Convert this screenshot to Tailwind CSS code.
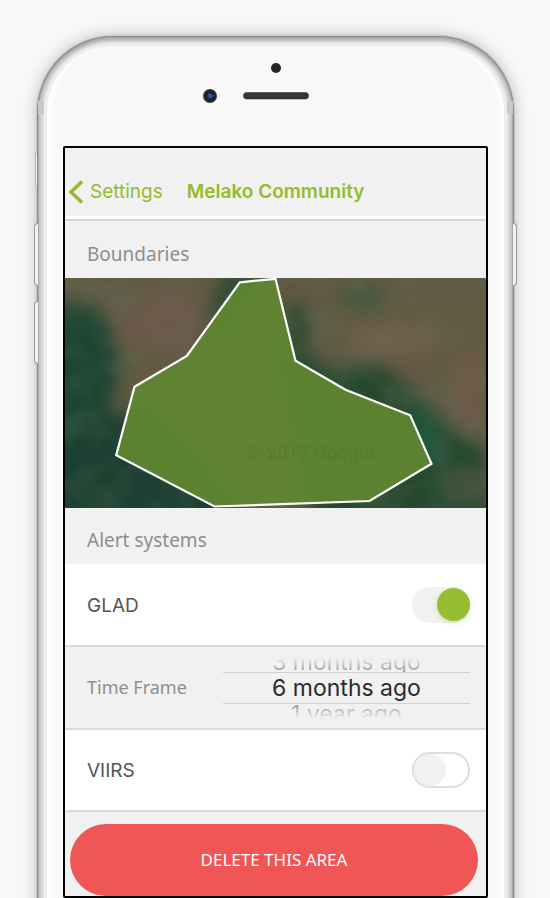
<!DOCTYPE html>
<html lang="en">
<head>
<meta charset="utf-8">
<meta name="viewport" content="width=device-width, initial-scale=1">
<title>Melako Community</title>
<script src="https://cdn.jsdelivr.net/npm/@tailwindcss/browser@4"></script>
</head>
<body class="bg-[#f8f8f8] font-['Inter','Roboto',sans-serif]">
<div class="overflow-hidden pl-[37px] pr-[36px] pt-9">
  <!-- Phone body -->
  <div class="relative -mb-32 rounded-[76px] bg-[#f8f8f8] px-[26px] pb-32 pt-6 shadow-[0_0_16px_rgba(0,0,0,0.26),0_0_2px_rgba(0,0,0,0.3),inset_0_0_0_1px_#8b8d91,inset_0_0_0_2px_#a7a9ad,inset_0_2px_4px_1px_#97999d,inset_0_0_0_5px_#d3d5d8,inset_0_0_0_7px_#dfe0e2,inset_0_0_0_8px_#f1f1f1,inset_0_0_0_10px_#ececec,inset_8px_0_5px_6px_#ffffff,inset_-8px_0_5px_6px_#ffffff]">
    <!-- Side buttons and antenna bands -->
    <span class="absolute -left-[2px] top-[116px] h-[35px] w-[2px] rounded-l-sm border border-r-0 border-[#b4b5b7] bg-[#eeeeee]"></span>
    <span class="absolute -left-[3px] top-[187px] h-[63px] w-[4px] rounded-l-sm border border-r-0 border-[#96989b] bg-[#f1f1f1]"></span>
    <span class="absolute -left-[3px] top-[265px] h-[63px] w-[4px] rounded-l-sm border border-r-0 border-[#96989b] bg-[#f1f1f1]"></span>
    <span class="absolute -right-[3px] top-[187px] h-[63px] w-[4px] rounded-r-sm border border-l-0 border-[#96989b] bg-[#f1f1f1]"></span>
    <span class="absolute left-px top-[65px] h-[13px] w-[6px] bg-[#c9c9c9]"></span>
    <span class="absolute right-px top-[65px] h-[13px] w-[6px] bg-[#c9c9c9]"></span>

    <svg class="mx-auto block h-[86px] w-[160px]" viewBox="0 0 160 86" aria-hidden="true">
      <defs>
        <radialGradient id="lens"><stop offset="0" stop-color="#3357b4"/><stop offset=".35" stop-color="#1f3266"/><stop offset=".6" stop-color="#171a22"/><stop offset="1" stop-color="#3c3c3c"/></radialGradient>
      </defs>
      <circle cx="80" cy="8" r="5" fill="#2a2224"/>
      <circle cx="14" cy="36" r="7" fill="url(#lens)"/>
      <path d="M12 34l3 1-1 3M16 37l2-2" stroke="#4a6fc0" stroke-width=".7" fill="none"/>
      <rect x="47.500" y="32.500" width="65" height="6.500" rx="3" fill="#363637" stroke="#222" stroke-width=".5"/>
    </svg>

    <main class="overflow-hidden rounded-xs border-2 border-black bg-[#f1f1f1]">
      <header class="flex h-[73px] items-end border-b-2 border-[#d5d5d5]">
        <div class="flex w-full items-center border-b-[3px] border-white pb-2">
          <a href="#settings" class="flex items-center text-[19px] leading-8 text-[#94bc2c]">
            <svg class="mx-[3px] h-6 w-4" viewBox="0 0 16 24" fill="none" stroke="#94bc2c" stroke-width="3.500" aria-hidden="true"><path d="M14 1.500L3 12l11 10.500"/></svg>
            <span class="pl-[3px]">Settings</span>
          </a>
          <h1 class="pl-6 text-[19px] font-semibold leading-8 text-[#94bc2c]">Melako Community</h1>
        </div>
      </header>

      <section>
        <h2 class="h-[57px] pl-[22px] pt-[17px] font-['Noto_Sans',sans-serif] text-[19px] leading-8 text-[#8e8e8e]">Boundaries</h2>
        <svg class="block h-[230px] w-full" viewBox="0 0 422 230" preserveAspectRatio="xMidYMid slice" role="img" aria-label="Area boundary on satellite map">
          <defs>
            <filter id="soft" x="-30%" y="-30%" width="160%" height="160%"><feGaussianBlur stdDeviation="9"/></filter>
            <filter id="grain" x="0" y="0" width="100%" height="100%">
              <feTurbulence type="fractalNoise" baseFrequency=".03" numOctaves="2" seed="8"/>
              <feColorMatrix values="0 0 0 0 .12  0 0 0 0 .18  0 0 0 0 .12  1.600 0 0 0 -.65"/>
            </filter>
          </defs>
          <rect width="422" height="230" fill="#625a43"/>
          <g filter="url(#soft)">
            <path d="M-30 26L28 26 46 50 56 90 46 130 48 250H-30z" fill="#1f4531"/>
            <path d="M30 145L80 130 190 250H-20V180z" fill="#1f4131"/>
            <path d="M165 -12L200 -12 150 55 130 60z" fill="#2b4832"/>
            <path d="M222 20L246 35 240 75 270 92 305 82 330 95 352 118 385 145 422 172 422 250H250L220 90z" fill="#26482f"/>
            <path d="M350 120L380 150 375 190 340 170z" fill="#21563b"/>
            <ellipse cx="100" cy="42" rx="42" ry="32" fill="#6d5a49"/>
            <ellipse cx="298" cy="20" rx="24" ry="12" fill="#40583a"/>
            <ellipse cx="330" cy="62" rx="50" ry="16" fill="#70604c"/>
            <ellipse cx="402" cy="110" rx="14" ry="40" fill="#715a48"/>
            <ellipse cx="400" cy="206" rx="20" ry="10" fill="#4d5540"/>
          </g>
          <rect width="422" height="230" filter="url(#grain)" opacity=".4"/>
          <path d="M175.300 4.300L211 .8 231 82.700 281 111.700 345.700 137.300 367 185.700 305 223 150 228.500 51.700 177.300 70 108.700 122.300 78z" fill="#5f8631" fill-opacity=".94" stroke="#fff" stroke-width="2.200"/>
          <text x="182" y="181" font-family="Roboto, sans-serif" font-size="19" font-weight="500" fill="#486f2d" opacity=".3">© 2017 Google</text>
        </svg>
      </section>

      <section>
        <h2 class="h-14 pl-[22px] pt-4 font-['Noto_Sans',sans-serif] text-[19px] leading-8 text-[#8e8e8e]">Alert systems</h2>

        <div class="flex h-[83px] items-center justify-between border-b-2 border-[#d9d9d9] bg-white pl-[22px] pr-4">
          <label for="glad" class="pt-[3px] text-[19px] text-[#555555]">GLAD</label>
          <input id="glad" type="checkbox" role="switch" checked class="flex h-9 w-[58px] appearance-none items-center rounded-full bg-[#f1f1f1] before:size-[33px] before:rounded-full before:bg-[#f1f1f1] checked:justify-end checked:before:bg-[#96bd31] checked:before:shadow-[0_2px_5px_rgba(150,189,49,0.3)]">
        </div>

        <div role="radiogroup" aria-labelledby="frame-label" class="flex h-[83px] items-center justify-between border-b-2 border-[#d9d9d9] pl-[22px] pr-4">
          <span id="frame-label" class="font-['Noto_Sans',sans-serif] text-[18px] text-[#8e8e8e]">Time Frame</span>
          <div class="flex h-[60px] w-[247px] flex-col justify-center overflow-hidden text-center text-[23px] leading-[30px] text-[#2b2b2b]">
            <label class="flex h-[14px] shrink-0 flex-col justify-end bg-linear-to-b from-[#ededed] to-[#999999] bg-clip-text leading-5 text-transparent"><input type="radio" name="frame" class="sr-only">3 months ago</label>
            <label class="shrink-0 border-y border-[#d2d2d2]"><input type="radio" name="frame" checked class="sr-only">6 months ago</label>
            <label class="h-[14px] shrink-0 overflow-hidden bg-linear-to-b from-[#999999] to-[#ededed] bg-clip-text leading-5 text-transparent"><input type="radio" name="frame" class="sr-only">1 year ago</label>
          </div>
        </div>

        <div class="flex h-[82px] items-center justify-between border-b-2 border-[#d9d9d9] bg-white pl-[22px] pr-4">
          <label for="viirs" class="pt-[3px] text-[19px] text-[#555555]">VIIRS</label>
          <input id="viirs" type="checkbox" role="switch" class="flex h-9 w-[58px] appearance-none items-center rounded-full border-2 border-[#dddddd] bg-white before:size-8 before:rounded-full before:bg-[#f1f1f1] checked:justify-end checked:before:bg-[#96bd31]">
        </div>
      </section>

      <div class="pl-[5px] pr-2 pt-3">
        <button type="button" class="h-[72px] w-full rounded-full bg-[#f05656] font-['Noto_Sans',sans-serif] text-[17px] text-white">DELETE THIS AREA</button>
      </div>
    </main>
  </div>
</div>
</body>
</html>
